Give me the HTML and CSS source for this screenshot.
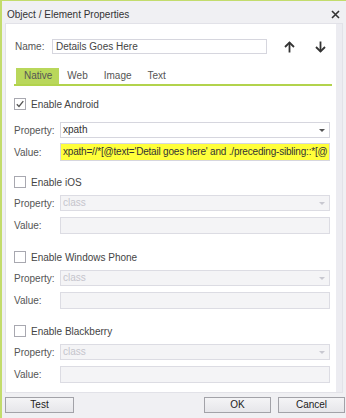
FILE: index.html
```html
<!DOCTYPE html>
<html>
<head>
<meta charset="utf-8">
<link rel="stylesheet" href="styles.css">
</head>
<body>
<div class="window">
  <div class="titlebar">
    <span class="title">Object / Element Properties</span>
    <span class="close">
      <svg width="9" height="9" viewBox="0 0 9 9"><path d="M1 1L8 8M8 1L1 8" stroke="#333" stroke-width="1.6"/></svg>
    </span>
  </div>
  <div class="panel">
    <div class="name-row">
      <span class="name-label">Name:</span>
      <div class="name-input">Details Goes Here</div>
      <span class="arrow up">
        <svg width="11" height="12" viewBox="0 0 11 12"><path d="M5.5 1.5V11.5" stroke="#333" stroke-width="1.8"/><path d="M1 6L5.5 1.5L10 6" fill="none" stroke="#333" stroke-width="1.8"/></svg>
      </span>
      <span class="arrow down">
        <svg width="11" height="12" viewBox="0 0 11 12"><path d="M5.5 0.5V10.5" stroke="#333" stroke-width="1.8"/><path d="M1 6L5.5 10.5L10 6" fill="none" stroke="#333" stroke-width="1.8"/></svg>
      </span>
    </div>
    <div class="tabs">
      <span class="tab active">Native</span>
      <span class="tab">Web</span>
      <span class="tab">Image</span>
      <span class="tab">Text</span>
    </div>

    <div class="section first">
      <div class="check-row">
        <span class="checkbox">
          <svg width="10" height="10" viewBox="0 0 10 10"><path d="M1.8 5.2L4 7.5L8.3 2.2" fill="none" stroke="#555" stroke-width="1.3"/></svg>
        </span>
        <span class="check-label">Enable Android</span>
      </div>
      <div class="field-row prop">
        <span class="field-label">Property:</span>
        <div class="select"><span>xpath</span><i class="caret"></i></div>
      </div>
      <div class="field-row val">
        <span class="field-label">Value:</span>
        <div class="input yellow">xpath=//*[@text='Detail goes here' and ./preceding-sibling::*[@</div>
      </div>
    </div>

    <div class="section">
      <div class="check-row">
        <span class="checkbox"></span>
        <span class="check-label">Enable iOS</span>
      </div>
      <div class="field-row prop">
        <span class="field-label">Property:</span>
        <div class="select disabled"><span>class</span><i class="caret"></i></div>
      </div>
      <div class="field-row val">
        <span class="field-label">Value:</span>
        <div class="input disabled"></div>
      </div>
    </div>

    <div class="section">
      <div class="check-row">
        <span class="checkbox"></span>
        <span class="check-label">Enable Windows Phone</span>
      </div>
      <div class="field-row prop">
        <span class="field-label">Property:</span>
        <div class="select disabled"><span>class</span><i class="caret"></i></div>
      </div>
      <div class="field-row val">
        <span class="field-label">Value:</span>
        <div class="input disabled"></div>
      </div>
    </div>

    <div class="section last">
      <div class="check-row">
        <span class="checkbox"></span>
        <span class="check-label">Enable Blackberry</span>
      </div>
      <div class="field-row prop">
        <span class="field-label">Property:</span>
        <div class="select disabled"><span>class</span><i class="caret"></i></div>
      </div>
      <div class="field-row val">
        <span class="field-label">Value:</span>
        <div class="input disabled"></div>
      </div>
    </div>
    <div class="scroll-strip"></div>
  </div>
  <div class="footer">
    <button class="btn test">Test</button>
    <div class="spacer"></div>
    <button class="btn ok">OK</button>
    <button class="btn cancel">Cancel</button>
  </div>
</div>
</body>
</html>
```

FILE: styles.css
```css
html, body {
  margin: 0;
  padding: 0;
}
body {
  width: 346px;
  height: 418px;
  overflow: hidden;
  background: #f0f0f3;
  font-family: "Liberation Sans", Arial, sans-serif;
  font-size: 10px;
  color: #444;
}
.window {
  box-sizing: border-box;
  height: 418px;
  border-left: 2px solid #c3dc6c;
  border-top: 1px solid #c3dc6c;
  display: flex;
  flex-direction: column;
}
.titlebar {
  height: 18px;
  padding-top: 4px;
  padding-left: 5px;
  padding-right: 6px;
  display: flex;
  align-items: center;
  justify-content: space-between;
  color: #333;
  font-size: 10px;
}
.close {
  display: flex;
  align-items: center;
}
.panel {
  position: relative;
  box-sizing: border-box;
  margin-left: 3px;
  width: 338px;
  height: 370px;
  background: #fff;
  border: 1px solid #e2e2e8;
  padding-left: 8px;
  padding-top: 15px;
}
.scroll-strip {
  position: absolute;
  right: 0;
  top: 0;
  bottom: 0;
  width: 6px;
  background: #ececf1;
}
.name-row {
  display: flex;
  align-items: center;
  height: 15px;
}
.name-label {
  width: 37px;
  padding-left: 1px;
  color: #555;
}
.name-input {
  box-sizing: border-box;
  width: 215px;
  height: 15px;
  border: 1px solid #d6d6de;
  padding-left: 3px;
  line-height: 13px;
  color: #444;
}
.arrow {
  display: flex;
  align-items: center;
}
.arrow.up {
  margin-left: 17px;
}
.arrow.down {
  margin-left: 20px;
}
.tabs {
  margin-top: 14px;
  width: 316px;
  height: 16px;
  display: flex;
  border-bottom: 2px solid #b2d34c;
  padding-left: 2px;
  box-sizing: content-box;
}
.tab {
  padding: 0 8px 0 8px;
  line-height: 16px;
  color: #555;
}
.tab.active {
  background: #b9d75b;
  padding: 0 7px 0 8px;
  color: #555;
}
.section {
  margin-top: 17px;
}
.section.first {
  margin-top: 12px;
}
.section.first + .section {
  margin-top: 15px;
}
.section.last {
  margin-top: 16px;
}
.check-row {
  display: flex;
  align-items: center;
  height: 12px;
}
.checkbox {
  box-sizing: border-box;
  width: 12px;
  height: 12px;
  border: 1px solid #a8a8b0;
  background: #fff;
  display: flex;
  align-items: center;
  justify-content: center;
}
.check-label {
  margin-left: 5px;
  color: #444;
}
.field-row {
  display: flex;
  align-items: center;
}
.field-row.prop {
  margin-top: 7px;
}
.section.first .field-row.prop {
  margin-top: 12px;
}
.field-row.val {
  margin-top: 6px;
}
.section.first .field-row.val {
  margin-top: 5px;
}
.field-label {
  width: 46px;
  color: #555;
}
.select, .input {
  box-sizing: border-box;
  width: 270px;
  border: 1px solid #d6d6de;
  padding-left: 2px;
  white-space: nowrap;
  overflow: hidden;
  color: #333;
}
.select {
  height: 16px;
  line-height: 14px;
  position: relative;
  background: #fff;
}
.input {
  height: 17px;
  line-height: 15px;
}
.section.first .input {
  height: 18px;
  line-height: 16px;
}
.input.yellow {
  background: #ffff3a;
  color: #333;
  letter-spacing: -0.2px;
}
.select.disabled, .input.disabled {
  background: #f4f4f6;
  border-color: #dcdce3;
  color: #c4c4cc;
}
.caret {
  position: absolute;
  right: 4px;
  top: 6px;
  width: 0;
  height: 0;
  border-left: 3px solid transparent;
  border-right: 3px solid transparent;
  border-top: 3px solid #555;
}
.select.disabled .caret {
  border-top-color: #c8c8d0;
}
.footer {
  display: flex;
  margin-top: 4px;
  padding-left: 3px;
  padding-right: 1px;
}
.spacer {
  flex: 1;
}
.btn {
  box-sizing: border-box;
  height: 16px;
  padding: 0;
  margin: 0;
  border: 1px solid #a2a2a8;
  background: linear-gradient(#f4f4f6, #e6e6ea);
  font-family: "Liberation Sans", Arial, sans-serif;
  font-size: 10px;
  color: #222;
  line-height: 14px;
}
.btn.test {
  width: 69px;
}
.btn.ok {
  width: 67px;
}
.btn.cancel {
  width: 67px;
  margin-left: 7px;
}
```
